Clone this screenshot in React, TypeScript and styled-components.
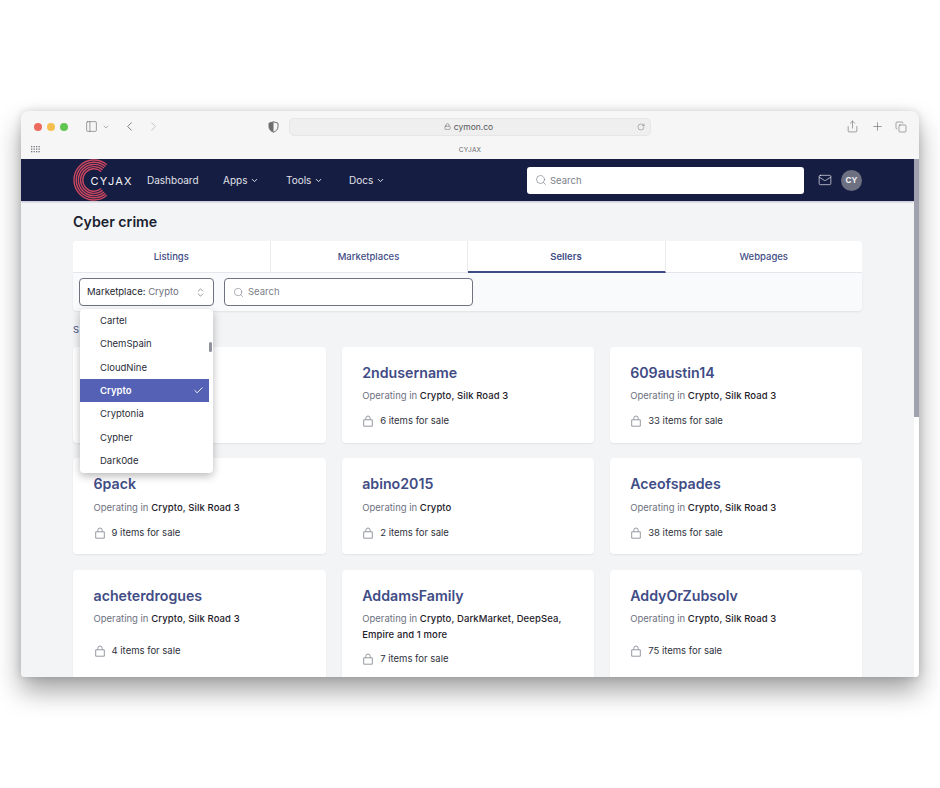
import React from 'react';
import styled, { createGlobalStyle } from 'styled-components';
import {
  Check,
  ChevronDown,
  ChevronLeft,
  ChevronRight,
  ChevronsUpDown,
  Copy,
  Lock,
  Mail,
  PanelLeft,
  Plus,
  RotateCw,
  Search,
  Share,
} from 'lucide-react';

const GlobalStyle = createGlobalStyle`
  html, body {
    margin: 0;
    padding: 0;
    background: #ffffff;
    font-family: Inter, "Liberation Sans", sans-serif;
  }
  * { box-sizing: border-box; }
`;

const Stage = styled.div`
  width: 940px;
  height: 788px;
  padding: 111px 21px 0;
  overflow: hidden;
`;

const BrowserWindow = styled.div`
  width: 898px;
  height: 566px;
  display: flex;
  flex-direction: column;
  border-radius: 8px 8px 4px 4px;
  overflow: hidden;
  background: #f6f6f6;
  box-shadow: 0 14px 26px rgba(0, 0, 0, 0.36), 0 0 8px rgba(0, 0, 0, 0.14);
`;

const Toolbar = styled.div`
  height: 31px;
  flex: none;
  display: flex;
  align-items: center;
  padding: 0 12px 0 13px;
  color: #6e6e70;
`;

const Lights = styled.div`
  display: flex;
  gap: 5px;
  margin-right: 17px;
`;

const Light = styled.span<{ $color: string }>`
  width: 8px;
  height: 8px;
  border-radius: 50%;
  background: ${(p) => p.$color};
`;

const ToolGroup = styled.div`
  display: flex;
  align-items: center;
  gap: 4px;
  width: 183px;
`;

const AddressBar = styled.div`
  width: 362px;
  height: 18px;
  margin-left: 10px;
  padding: 0 5px 0 10px;
  display: flex;
  align-items: center;
  border-radius: 5px;
  background: #efefef;
  border: 1px solid #e6e6e6;
  font-size: 8.5px;
  color: #55565a;
`;

const Url = styled.div`
  flex: 1;
  display: flex;
  align-items: center;
  justify-content: center;
  gap: 3px;
`;

const ToolbarEnd = styled.div`
  margin-left: auto;
  display: flex;
  align-items: center;
  gap: 11.5px;
`;

const FavBar = styled.div`
  height: 17px;
  flex: none;
  position: relative;
  display: flex;
  align-items: center;
  justify-content: center;
  font-size: 6.5px;
  letter-spacing: 0.2px;
  color: #66676a;
  padding-bottom: 2px;
`;

const GridDots = styled.svg`
  position: absolute;
  left: 10px;
  top: 4px;
`;

const Viewport = styled.div`
  flex: 1;
  min-height: 0;
  display: flex;
`;

const Page = styled.div`
  flex: 1;
  min-width: 0;
  background: #f3f4f6;
  overflow: hidden;
`;

const ScrollTrack = styled.div`
  width: 5px;
  flex: none;
  background: #ffffff;
`;

const ScrollThumb = styled.div`
  height: 258px;
  background: #9fa1af;
`;

const Nav = styled.nav`
  height: 42px;
  display: flex;
  align-items: center;
  padding: 0 52px;
  background: #161d42;
  box-shadow: 0 1px 2px rgba(22, 29, 66, 0.25);
  color: #e0e2ea;
  font-size: 10px;
`;

const LogoWrap = styled.div`
  position: relative;
  width: 58px;
  height: 42px;
  margin-right: 16px;
  flex: none;
`;

const LogoText = styled.span`
  position: absolute;
  left: 17.5px;
  top: 14.5px;
  font-size: 11px;
  font-weight: 400;
  letter-spacing: 1.2px;
  color: #f2f3f7;
`;

const NavLink = styled.span<{ $width: number }>`
  width: ${(p) => p.$width}px;
  display: flex;
  align-items: center;
  gap: 3px;
`;

const NavSearch = styled.div`
  width: 277px;
  height: 27px;
  margin-left: 101px;
  padding-left: 8px;
  display: flex;
  align-items: center;
  gap: 3px;
  border-radius: 3px;
  background: #ffffff;
  color: #7b7f8a;
  font-size: 9.5px;
`;

const Avatar = styled.div`
  width: 21px;
  height: 21px;
  margin-left: 9px;
  border-radius: 50%;
  display: flex;
  align-items: center;
  justify-content: center;
  background: #6c7080;
  color: #f3f3f6;
  font-size: 8px;
  font-weight: 700;
`;

const Content = styled.main`
  position: relative;
  padding: 0 52px;
`;

const Title = styled.h1`
  margin: 0;
  padding-top: 10.5px;
  height: 40px;
  font-size: 14.2px;
  line-height: 20px;
  font-weight: 600;
  color: #1b1f30;
`;

const Tabs = styled.div`
  display: grid;
  grid-template-columns: 197.5px 197px 198px 1fr;
  height: 32px;
  background: #ffffff;
  border-radius: 4px 4px 0 0;
  border-bottom: 1px solid #e5e7ec;
`;

const Tab = styled.div<{ $active?: boolean }>`
  display: flex;
  align-items: center;
  justify-content: center;
  font-size: 9.5px;
  font-weight: ${(p) => (p.$active ? 600 : 500)};
  color: #3f4c85;
  border-right: 1px solid #e8eaee;
  border-bottom: ${(p) => (p.$active ? '2px solid #3f4c85' : 'none')};
  height: ${(p) => (p.$active ? '32px' : '31px')};

  &:last-child {
    border-right: none;
  }
`;

const FilterBar = styled.div`
  position: relative;
  height: 38px;
  display: flex;
  align-items: flex-start;
  gap: 10px;
  padding: 5px 6px 0;
  background: #f9fafb;
  border-radius: 0 0 4px 4px;
  box-shadow: 0 1px 2px rgba(0, 0, 0, 0.08);
`;

const Select = styled.div`
  width: 135px;
  height: 28px;
  padding: 0 7px;
  display: flex;
  align-items: center;
  justify-content: space-between;
  background: #ffffff;
  border: 1px solid #6f7280;
  border-radius: 4px;
  font-size: 9.5px;
  line-height: 12px;
  color: #23262f;
`;

const Muted = styled.span`
  color: #6d7180;
`;

const FilterSearch = styled.div`
  width: 249px;
  height: 28px;
  padding-left: 8px;
  display: flex;
  align-items: center;
  gap: 4px;
  background: #ffffff;
  border: 1px solid #6f7280;
  border-radius: 4px;
  font-size: 9.5px;
  line-height: 12px;
  color: #7b7f8a;
`;

const Dropdown = styled.ul`
  position: absolute;
  left: 7px;
  top: 36px;
  width: 133px;
  height: 164px;
  margin: 0;
  padding: 0;
  list-style: none;
  background: #ffffff;
  border-radius: 4px;
  box-shadow: 0 3px 9px rgba(0, 0, 0, 0.28);
  overflow: hidden;
  z-index: 2;
`;

const DropdownThumb = styled.div`
  position: absolute;
  right: 1px;
  top: 33px;
  width: 3px;
  height: 10px;
  border-radius: 2px;
  background: #8f919b;
`;

const Option = styled.li<{ $selected?: boolean }>`
  height: 23.3px;
  width: 129px;
  padding: 0 5px 0 20px;
  display: flex;
  align-items: center;
  justify-content: space-between;
  font-size: 9.5px;
  font-weight: ${(p) => (p.$selected ? 600 : 400)};
  color: ${(p) => (p.$selected ? '#ffffff' : '#2a2d38')};
  background: ${(p) => (p.$selected ? '#5561b5' : 'transparent')};
`;

const ResultCount = styled.div`
  height: 35.7px;
  padding-top: 13px;
  font-size: 9.5px;
  line-height: 12px;
  color: #3f4c85;
`;

const CardGrid = styled.div`
  display: grid;
  grid-template-columns: 253px 252.3px 1fr;
  column-gap: 15.7px;
  row-gap: 15.5px;
`;

const Card = styled.article`
  min-height: 96px;
  padding: 16px 20.5px 14.5px;
  background: #ffffff;
  border-radius: 4px;
  box-shadow: 0 1px 2px rgba(0, 0, 0, 0.07);
`;

const SellerName = styled.h2`
  margin: 0;
  font-size: 14.2px;
  line-height: 20px;
  font-weight: 600;
  color: #3f4c85;
`;

const Operating = styled.p`
  margin: 5.5px 0 0;
  font-size: 9.5px;
  line-height: 15.5px;
  color: #6d7180;

  strong {
    font-weight: 500;
    letter-spacing: 0.1px;
    color: #1f222b;
  }
`;

const ForSale = styled.div<{ $gap: number }>`
  margin-top: ${(p) => p.$gap}px;
  display: flex;
  align-items: center;
  gap: 6px;
  font-size: 9.5px;
  line-height: 14px;
  color: #2e313c;
`;

const HalfShield = () => (
  <svg width="11" height="12" viewBox="0 0 11 12">
    <path d="M5.5 .8 10 2.2v3.4c0 2.9-2 4.7-4.5 5.6C3 10.3 1 8.5 1 5.6V2.2z" fill="none" stroke="#6e6e70" strokeWidth="1" />
    <path d="M5.5 .8 1 2.2v3.4c0 2.9 2 4.7 4.5 5.6z" fill="#6e6e70" />
  </svg>
);

const BagIcon = () => (
  <svg width="12" height="12" viewBox="0 0 12 12" fill="none" stroke="#8b8e99" strokeWidth="0.9">
    <path d="M1.7 4.8h8.6v6.4H1.7z" strokeLinejoin="round" />
    <path d="M3.8 4.8V3.2a2.2 2.2 0 0 1 4.4 0v1.6" />
  </svg>
);

// concentric rings, open on the right where the wordmark sits
const LogoRings = () => {
  const radii = [20, 17.8, 15.6, 13.4, 11.2];
  return (
    <svg width="42" height="42" viewBox="0 0 42 42" fill="none" stroke="#c9465f" strokeWidth="1.4">
      {radii.map((r) => {
        const a = (50 * Math.PI) / 180;
        const x = 21 + r * Math.cos(a);
        const dy = r * Math.sin(a);
        return <path key={r} d={`M${x} ${21 - dy}A${r} ${r} 0 1 0 ${x} ${21 + dy}`} />;
      })}
    </svg>
  );
};

type Seller = { name: string; markets: string; items: number; gap: number };

const sellers: Seller[] = [
  { name: '2ndusername', markets: 'Crypto, Silk Road 3', items: 6, gap: 10.5 },
  { name: '609austin14', markets: 'Crypto, Silk Road 3', items: 33, gap: 10.5 },
  { name: '6pack', markets: 'Crypto, Silk Road 3', items: 9, gap: 10.5 },
  { name: 'abino2015', markets: 'Crypto', items: 2, gap: 10.5 },
  { name: 'Aceofspades', markets: 'Crypto, Silk Road 3', items: 38, gap: 10.5 },
  { name: 'acheterdrogues', markets: 'Crypto, Silk Road 3', items: 4, gap: 17.5 },
  { name: 'AddamsFamily', markets: 'Crypto, DarkMarket, DeepSea, Empire and 1 more', items: 7, gap: 10 },
  { name: 'AddyOrZubsolv', markets: 'Crypto, Silk Road 3', items: 75, gap: 17.5 },
];

const markets = ['Cartel', 'ChemSpain', 'CloudNine', 'Crypto', 'Cryptonia', 'Cypher', 'Dark0de'];

export default function App() {
  return (
    <Stage>
      <GlobalStyle />
      <BrowserWindow>
        <Toolbar>
          <Lights>
            <Light $color="#ed6a5e" />
            <Light $color="#f4bf4f" />
            <Light $color="#61c554" />
          </Lights>
          <ToolGroup>
            <PanelLeft size={13} strokeWidth={1.2} />
            <ChevronDown size={8} strokeWidth={1.5} />
            <ChevronLeft size={15} strokeWidth={1.4} style={{ marginLeft: 8 }} />
            <ChevronRight size={15} strokeWidth={1.2} color="#b4b4b6" style={{ marginLeft: 5 }} />
          </ToolGroup>
          <HalfShield />
          <AddressBar>
            <Url>
              <Lock size={7} strokeWidth={1.5} />
              cymon.co
            </Url>
            <RotateCw size={8} strokeWidth={1.2} />
          </AddressBar>
          <ToolbarEnd>
            <Share size={13} strokeWidth={1.2} />
            <Plus size={13} strokeWidth={1.2} />
            <Copy size={12} strokeWidth={1.2} />
          </ToolbarEnd>
        </Toolbar>
        <FavBar>
          <GridDots width="9" height="7" viewBox="0 0 9 7" fill="#77787c">
            {[0, 2.5, 5].flatMap((y) =>
              [0, 2.5, 5, 7.5].map((x) => <rect key={`${x}-${y}`} x={x} y={y} width="1.3" height="1.3" />),
            )}
          </GridDots>
          CYJAX
        </FavBar>
        <Viewport>
          <Page>
            <Nav>
              <LogoWrap>
                <LogoRings />
                <LogoText>CYJAX</LogoText>
              </LogoWrap>
              <NavLink $width={76}>Dashboard</NavLink>
              <NavLink $width={63}>
                Apps <ChevronDown size={9} strokeWidth={2.6} />
              </NavLink>
              <NavLink $width={63}>
                Tools <ChevronDown size={9} strokeWidth={2.6} />
              </NavLink>
              <NavLink $width={77}>
                Docs <ChevronDown size={9} strokeWidth={2.6} />
              </NavLink>
              <NavSearch>
                <Search size={12} strokeWidth={1.3} />
                Search
              </NavSearch>
              <Mail size={14} strokeWidth={1.2} color="#e6e7ee" style={{ marginLeft: 14 }} />
              <Avatar>CY</Avatar>
            </Nav>
            <Content>
              <Title>Cyber crime</Title>
              <Tabs>
                <Tab>Listings</Tab>
                <Tab>Marketplaces</Tab>
                <Tab $active>Sellers</Tab>
                <Tab>Webpages</Tab>
              </Tabs>
              <FilterBar>
                <Select>
                  <span>
                    Marketplace: <Muted>Crypto</Muted>
                  </span>
                  <ChevronsUpDown size={11} strokeWidth={1.3} color="#4d505c" />
                </Select>
                <FilterSearch>
                  <Search size={11} strokeWidth={1.3} />
                  Search
                </FilterSearch>
                <Dropdown>
                  {markets.map((m) => (
                    <Option key={m} $selected={m === 'Crypto'}>
                      {m}
                      {m === 'Crypto' && <Check size={11} strokeWidth={2} />}
                    </Option>
                  ))}
                  <DropdownThumb />
                </Dropdown>
              </FilterBar>
              <ResultCount>S</ResultCount>
              <CardGrid>
                <Card />
                {sellers.map((s) => (
                  <Card key={s.name}>
                    <SellerName>{s.name}</SellerName>
                    <Operating>
                      Operating in <strong>{s.markets}</strong>
                    </Operating>
                    <ForSale $gap={s.gap}>
                      <BagIcon />
                      {s.items} items for sale
                    </ForSale>
                  </Card>
                ))}
              </CardGrid>
            </Content>
          </Page>
          <ScrollTrack>
            <ScrollThumb />
          </ScrollTrack>
        </Viewport>
      </BrowserWindow>
    </Stage>
  );
}
